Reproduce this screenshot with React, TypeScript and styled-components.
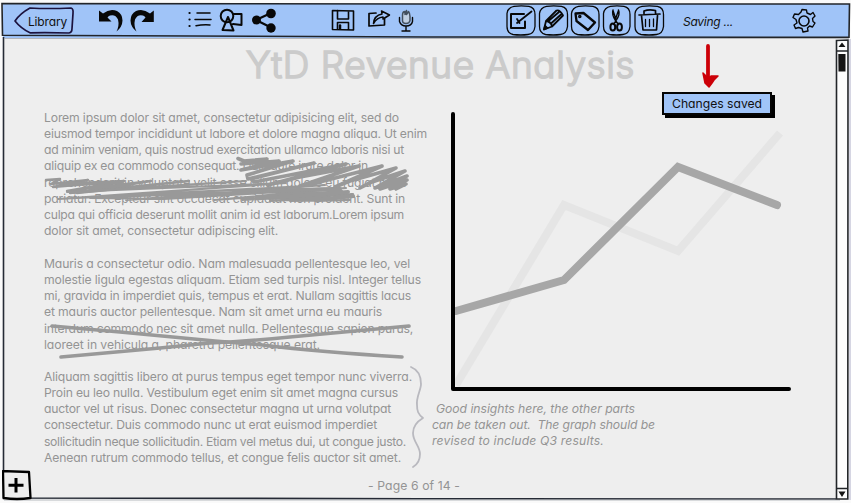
import React, { useLayoutEffect, useRef, useState } from "react";
import styled, { createGlobalStyle } from "styled-components";

const GlobalStyle = createGlobalStyle`
  *, *::before, *::after { box-sizing: border-box; }
  body {
    margin: 0;
    background: #fafafa;
    font-family: Inter, "Open Sans", sans-serif;
    font-feature-settings: "cv11" 1;
    overflow: hidden;
  }
  svg { display: block; flex: none; }
`;

const Screen = styled.div`
  position: relative;
  width: 851px;
  height: 503px;
  padding: 4px 2px 4px 3px;
  display: flex;
  flex-direction: column;
  background: #fafafa;
`;

const Toolbar = styled.header`
  display: flex;
  align-items: center;
  flex: none;
  height: 34px;
  background: #a0c4f8;
`;

const Tool = styled.button<{ $gap: number }>`
  margin: 0 0 0 ${(p) => p.$gap}px;
  padding: 0;
  border: 0;
  background: none;
  flex: none;
  height: 32px;
`;

const LibraryButton = styled.button`
  position: relative;
  margin: 0 0 0 10px;
  padding: 0 0 0 15px;
  width: 62px;
  height: 32px;
  border: 0;
  background: none;
  text-align: left;
  font: inherit;
  color: #111;
  font-size: 12px;
`;

const ButtonOutline = styled.svg`
  position: absolute;
  inset: 0;
`;

const Status = styled.div`
  margin-left: 17px;
  width: 111px;
  font-size: 12px;
  font-style: italic;
  color: #111;
`;

const Body = styled.div`
  display: flex;
  flex: 1;
  min-height: 0;
`;

const Page = styled.main`
  width: 833px;
  padding-left: 41px;
  background: #eee;
  display: flex;
  flex-direction: column;
`;

const Title = styled.h1`
  margin: 0 0 0 202px;
  height: 71px;
  padding-top: 4px;
  line-height: 46px;
  font-size: 37px;
  font-weight: 300;
  color: #cbcbcb;
  -webkit-text-stroke: 1.6px #cbcbcb;
`;

const Columns = styled.div`
  display: grid;
  grid-template-columns: 388px 1fr;
  height: 367px;
`;

const TextColumn = styled.section`
  padding-top: 1px;
`;

const Paragraph = styled.div`
  height: 129px;
  margin-bottom: 17px;
  font-size: 12.2px;
  line-height: 16.15px;
  color: #949494;

  & + & { height: 97px; margin-bottom: 16px; }
`;

const Note = styled.div`
  padding-top: 6px;
  font-size: 12.2px;
  line-height: 16.15px;
  font-style: italic;
  color: #949494;
`;

const Indent = styled.div<{ $by: number }>`
  padding-left: ${(p) => p.$by}px;
`;

const PageNumber = styled.footer`
  padding: 1px 0 0 324px;
  font-size: 12.2px;
  line-height: 18px;
  color: #949494;
`;

const ScrollTrack = styled.aside`
  width: 13px;
  background: #fdfdfd;
`;

const Overlay = styled.svg`
  position: absolute;
  inset: 0;
  pointer-events: none;
`;

const Toast = styled.div`
  position: absolute;
  left: 662px;
  top: 92px;
  width: 110px;
  height: 23px;
  padding-left: 8px;
  border: 2px solid #050505;
  background: #a0c4f8;
  box-shadow: 3px 3px 0 #000;
  font-size: 12.2px;
  line-height: 20px;
  color: #111;
`;

const AddButton = styled.button`
  position: absolute;
  left: 2px;
  top: 470px;
  width: 29px;
  height: 30px;
  padding: 0;
  border: 0;
  background: #eee;
`;

const FittedText = styled.span`
  display: block;
  width: max-content;
  white-space: pre;
`;

/** A single line of text whose tracking is adjusted to a given measure. */
function Line({ width, children }: { width: number; children: string }) {
  const ref = useRef<HTMLSpanElement>(null);
  const [spacing, setSpacing] = useState(0);
  useLayoutEffect(() => {
    if (!ref.current) return;
    const natural = ref.current.getBoundingClientRect().width;
    setSpacing((width - natural) / children.length);
  }, [width, children]);
  return (
    <FittedText ref={ref} style={{ letterSpacing: `${spacing}px` }}>
      {children}
    </FittedText>
  );
}

const paragraphs: [string, number][][] = [
  [
    ["Lorem ipsum dolor sit amet, consectetur adipisicing elit, sed do", 355],
    ["eiusmod tempor incididunt ut labore et dolore magna aliqua. Ut enim", 383],
    ["ad minim veniam, quis nostrud exercitation ullamco laboris nisi ut", 360],
    ["aliquip ex ea commodo consequat. Duis aute irure dolor in", 324],
    ["reprehenderit in voluptate velit esse cillum dolore eu fugiat nulla", 362],
    ["pariatur. Excepteur sint occaecat cupidatat non proident. Sunt in", 361],
    ["culpa qui officia deserunt mollit anim id est laborum.Lorem ipsum", 360],
    ["dolor sit amet, consectetur adipiscing elit.", 234],
  ],
  [
    ["Mauris a consectetur odio. Nam malesuada pellentesque leo, vel", 366],
    ["molestie ligula egestas aliquam. Etiam sed turpis nisl. Integer tellus", 377],
    ["mi, gravida in imperdiet quis, tempus et erat. Nullam sagittis lacus", 367],
    ["et mauris auctor pellentesque. Nam sit amet urna eu mauris", 338],
    ["interdum commodo nec sit amet nulla. Pellentesque sapien purus,", 369],
    ["laoreet in vehicula a, pharetra pellentesque erat.", 276],
  ],
  [
    ["Aliquam sagittis libero at purus tempus eget tempor nunc viverra.", 368],
    ["Proin eu leo nulla. Vestibulum eget enim sit amet magna cursus", 354],
    ["auctor vel ut risus. Donec consectetur magna ut urna volutpat", 347],
    ["consectetur. Duis commodo nunc ut erat euismod imperdiet", 333],
    ["sollicitudin neque sollicitudin. Etiam vel metus dui, ut congue justo.", 362],
    ["Aenean rutrum commodo tellus, et congue felis auctor sit amet.", 357],
  ],
];

type IconProps = { x: number; w: number; gap: number; label: string; children: React.ReactNode };

function Icon({ x, w, gap, label, children }: IconProps) {
  return (
    <Tool $gap={gap} aria-label={label}>
      <svg width={w} height={32} viewBox={`${x} 4.500 ${w} 32`} fill="none" stroke="#080808" strokeWidth={1.6} strokeLinecap="round" strokeLinejoin="round">
        {children}
      </svg>
    </Tool>
  );
}

const Frame = ({ x, w = 27 }: { x: number; w?: number }) => (
  <path strokeWidth={1.3} d={`M${x + 7} 5.8 Q${x + w / 2} 5 ${x + w - 6} 5.8 Q${x + w} 7 ${x + w} 14 L${x + w} 26 Q${x + w - 1} 33.5 ${x + w - 7} 34 Q${x + w / 2} 35 ${x + 6} 34 Q${x} 32.5 ${x} 26 L${x} 13 Q${x + 1} 6.8 ${x + 7} 5.8Z`} />
);

const Chart = () => (
  <svg width={345} height={286} viewBox="447 109 345 286" fill="none">
    <g strokeWidth={8}>
      <path stroke="#e5e5e5" d="M456 385L564 205L678 251L780 133" />
      <path stroke="#a7a7a7" strokeLinecap="round" d="M456 311L564 280L678 167L777 205" />
    </g>
    <path d="M453 114V389H789" stroke="#000" strokeWidth={4} strokeLinecap="round" strokeLinejoin="round" />
  </svg>
);

export default function App() {
  return (
    <>
      <GlobalStyle />
      <Screen>
        <Toolbar>
          <LibraryButton>
            <ButtonOutline width={62} height={32} viewBox="13 4.500 62 32" fill="none" stroke="#1b123d" strokeWidth={1.7} strokeLinejoin="round">
              <path d="M30 7.5Q48 8.5 71 7.5Q73.5 8 73 13L72 28Q72 32 69 32.5Q50 32 30 32.3Q21 28 15 20.5Q20 13 30 7.5Z" />
            </ButtonOutline>
            <Line width={39}>Library</Line>
          </LibraryButton>
          <Icon x={97} w={28} gap={22} label="Undo">
            <path fill="#080808" stroke="none" d="M99 10L103 13Q110 7.500 117 10.500Q122.500 13.500 122.500 20Q122.300 26.500 116.500 31Q119.500 25 118 19Q115.500 13.500 110 15Q108.500 15.500 107.500 17L111.500 21H99Z" />
          </Icon>
          <Icon x={128} w={28} gap={3} label="Redo">
            <path fill="#080808" stroke="none" d="M153.800 10L150 13Q143 7.500 136 10.500Q130.500 13.500 130.500 20Q130.700 26.500 136.500 31Q133.500 25 135 19Q137.500 13.500 143 15Q144.500 15.500 145.500 17L141.500 21.500H153.800Z" />
          </Icon>
          <Icon x={186} w={27} gap={30} label="List">
            <path strokeWidth={1.5} d="M197 12.5H210M195 19H211M196 25.200Q203 24 210 24.500" />
            <path strokeWidth={2.2} d="M189.500 12.500h.1M189.500 19h.1M189.500 25.500h.1" />
          </Icon>
          <Icon x={218} w={27} gap={5} label="Shapes">
            <circle cx="227" cy="15.500" r="6.300" strokeWidth={2} />
            <path strokeWidth={2} d="M233 13.500H241.500V24.500L233 23.500M228 16.500L222.500 29.500L233.500 30L228 16.500Z" />
          </Icon>
          <Icon x={250} w={28} gap={5} label="Share">
            <path strokeWidth={2.3} d="M271 12.500L256 19.500L271 27" />
            <g fill="#080808" stroke="none"><circle cx="271" cy="13" r="4.800" /><circle cx="256.500" cy="19.500" r="4.500" /><circle cx="271" cy="27.500" r="4.700" /></g>
          </Icon>
          <Icon x={330} w={27} gap={52} label="Save">
            <path d="M332.500 10L353.500 10.500V29.500L332.500 29ZM337.500 10V18.500H348.500V10.500M337.500 29V22H348.500V29" />
            <path strokeWidth={2.500} d="M340 25V28" />
          </Icon>
          <Icon x={366} w={26} gap={9} label="Export">
            <path strokeWidth={1.700} d="M376 12.500L369 13V25.500L384.500 24.500V18" />
            <path strokeWidth={1.500} d="M373.500 23Q374 15 382 13.500L381.500 10.500L389.500 14.500L383 18.500V16.500Q377 17 373.500 23Z" />
          </Icon>
          <Icon x={397} w={18} gap={5} label="Record">
            <path stroke="#44505f" strokeWidth={1.500} fill="#c0cfe2" d="M402.500 14.500Q402.500 11 405 11V14L406.500 10V14L408.500 11Q410 13 410 16V20Q409.500 23 406 23Q402.500 23 402.500 20Z" />
            <path strokeWidth={1.400} d="M399.500 17V21Q401 25.500 406 25.500Q411.500 25.500 412.500 21V17M406 26V30M402 30.500H410" />
          </Icon>
          <Icon x={505} w={32} gap={90} label="Edit">
            <Frame x={507} w={28} />
            <path strokeWidth={2} d="M524 13.500H511V27.500H525V21" /><path strokeWidth={1.800} d="M531.500 11L517 22.500M517 18.500L519.500 22.500" />
          </Icon>
          <Icon x={537} w={32} gap={0} label="Draw">
            <Frame x={539.500} w={28} />
            <path strokeWidth={1.800} d="M544 29L546 20.500L556.500 10Q560 9 563 15L552 26ZM546 20.500Q551 21 552 26M549 20L559 11.500M551 23L561 14" /><path fill="#080808" d="M544 29L545 25L547.500 27.500Z" />
          </Icon>
          <Icon x={569} w={32} gap={0} label="Tag">
            <Frame x={571.500} w={27.500} />
            <path strokeWidth={2.300} d="M575.500 13L583.500 12.500L595 22L588 29.500L576.500 20.500Z" /><circle cx="579.800" cy="16" r="1" />
          </Icon>
          <Icon x={601} w={32} gap={0} label="Cut">
            <Frame x={603.500} w={26.500} />
            <path strokeWidth={1.400} d="M613 9.500Q611.500 14 615.500 20L618.500 24M618.500 9.500Q620.500 14 616 20L613.500 24M613 10L616 19M618.500 10L616 17" />
            <g strokeWidth={2}><ellipse cx="612.800" cy="26.500" rx="2.400" ry="3.500" /><ellipse cx="619.500" cy="26.500" rx="2.400" ry="3.500" /></g>
          </Icon>
          <Icon x={633} w={33} gap={0} label="Delete">
            <Frame x={635} w={28.500} />
            <path strokeWidth={1.700} d="M639 14.500L660 13.500M644 13V10.500Q649 8.500 655.500 10V13M641.500 15L643 29.500H656.500L657.500 15" /><path strokeWidth={1.300} d="M645.500 19V26M649.500 19V26M653.500 18.500V26" />
          </Icon>
          <Status><Line width={50}>Saving ...</Line></Status>
          <Icon x={790} w={28} gap={-4} label="Settings">
            <path strokeWidth={1.400} d="M801 11.500L802 9L806.500 9.500L807 12.500L810.500 14L813 12L815 15.500L812.500 18L813 21L815 22.500L812.500 26.500L809.500 25.500L807.500 27.500L808 30.500L803 31.500L802 28L798.500 27L795.500 28L794 24.500L797 22.500L796 19L793 17L794.500 13.500L798.500 14Z" />
            <circle cx="804" cy="20.500" r="5" />
          </Icon>
        </Toolbar>
        <Body>
          <Page>
            <Title><Line width={389}>YtD Revenue Analysis</Line></Title>
            <Columns>
              <TextColumn>
                {paragraphs.map((lines, i) => (
                  <Paragraph key={i}>
                    {lines.map(([text, width]) => <Line key={text} width={width}>{text}</Line>)}
                  </Paragraph>
                ))}
              </TextColumn>
              <section>
                <Indent $by={15}><Chart /></Indent>
                <Note>
                  <Indent $by={4}><Line width={199}>Good insights here, the other parts</Line></Indent>
                  <Line width={223}>can be taken out.  The graph should be</Line>
                  <Line width={172}>revised to include Q3 results.</Line>
                </Note>
              </section>
            </Columns>
            <PageNumber><Line width={92}>- Page 6 of 14 -</Line></PageNumber>
          </Page>
          <ScrollTrack />
        </Body>

        {/* Pen marks drawn over the document */}
        <Overlay width={851} height={503} fill="none" strokeLinecap="round" strokeLinejoin="round">
          <g stroke="#999">
            <path strokeWidth={3.600} d="M238 158.500L244 161L267 159L241 164L279 161L241 170L293 161L247 175L248 179L314 163L251 179L254 182L346 164L268 185L300 177L359 166L300 186L312 184L382 166L335 187L350 181L396 168L360 188L372 182L405 171L375 188L407 176L380 189L407 180L390 189L406 184L396 189" />
            <path strokeWidth={2.400} d="M46 180L60 179L51 184L88 180L53 187L124 181L67 191L151 181L77 193L189 181L70 193" />
            <path strokeWidth={2.100} d="M70 193L246 181L67 192L286 183L58 199L325 185L126 200L336 188L90 198L164 199L346 188L214 200L342 191L242 200L353 194L270 201L354 197L290 201L350 200L316 201" />
            <path strokeWidth={4} d="M270 198L348 192M316 200L353 196M252 191L340 189M70 184L122 182" />
            <path strokeWidth={3.600} d="M52 326L120 332L215 341Q240 343 262 345Q320 352 402 357M61 357L160 348L210 343Q250 341 290 337L409 326" />
            <path strokeWidth={1.800} stroke="#b9b9bf" d="M411 367Q421 371 421 384C421 390 416 397 417 405C417 411 418 414 423 418C418 421 413 426 413 433C413 442 420 446 420 454Q420 463 413 467" />
          </g>
          <g stroke="#cc0008">
            <path strokeWidth={3.800} d="M708 46V82" />
            <path fill="#cc0008" strokeWidth={1.500} d="M703 73L705 75L708 78L711 76L718 76L714 80L712 83L709 87L705 83Z" />
          </g>
        </Overlay>

        {/* Hand-drawn window outline and scrollbar */}
        <Overlay width={851} height={503} fill="none" stroke="#222529" strokeWidth={1.600}>
          <path d="M2 3.500L430 4L849.500 4L849 37.300L430 37L2.500 35.300Z" />
          <path stroke="#252a35" d="M3.500 37V498L420 498.700L836 499" />
          <path stroke="#999da5" strokeWidth={0.700} d="M4 38.500H849M4 500H840" />
          <path stroke="#d6d6e3" strokeWidth={2} d="M850 39V500" />
          <path d="M836.500 40.500L848 40L847.800 499L836.500 499ZM836 51H848M836 488.500H848" />
          <path fill="#151515" stroke="none" d="M838.300 54H845.500V71.500H838.500ZM838.500 47L842 42.500L845.500 47ZM838.500 491.500H845.500L842 497Z" />
        </Overlay>
        <Toast><Line width={90}>Changes saved</Line></Toast>
        <AddButton aria-label="Add">
          <svg width={31} height={33} viewBox="0 0 31 33" fill="none" stroke="#000" strokeLinejoin="round">
            <path strokeWidth={2.300} d="M1 1L27 2L28.500 28Q15 30 1.500 28Z" />
            <path strokeWidth={3} d="M14 8V22.500M6.500 15.300H21.500" />
          </svg>
        </AddButton>
      </Screen>
    </>
  );
}
